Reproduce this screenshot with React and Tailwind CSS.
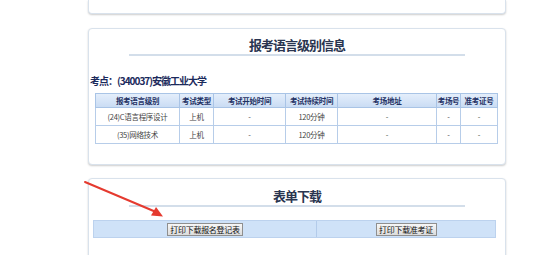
import React from 'react';

const cols = [84, 34, 72, 52, 99, 24, 37];
const heads = ['报考语言级别', '考试类型', '考试开始时间', '考试持续时间', '考场地址', '考场号', '准考证号'];
const rows = [
  ['(24)C语言程序设计', '上机', '-', '120分钟', '-', '-', '-'],
  ['(35)网络技术', '上机', '-', '120分钟', '-', '-', '-'],
];

const font = { fontFamily: '"Noto Sans CJK SC", "Liberation Sans", sans-serif' };

const Title = ({ children }) => (
  <div className="flex flex-col items-center">
    <h2 className="text-[13px] leading-[15px] font-bold tracking-[-1px] text-[#2a3550]">
      {children}
    </h2>
    <div className="mt-[2px] h-[2px] w-[336px] bg-[#d3deea]" />
  </div>
);

const App = () => {
  return (
    <div className="relative h-[255px] w-[553px] overflow-hidden bg-white" style={font}>
      <div className="ml-[88px] w-[418px]">
        {/* bottom of the previous panel */}
        <div className="h-[14px] rounded-b-[4px] border-x border-b border-[#d9e2ec] bg-white shadow-[0_1px_2px_rgba(0,0,0,0.2)]" />

        {/* 报考语言级别信息 */}
        <div className="mt-[14px] h-[137px] rounded-[4px] border border-[#d9e2ec] bg-white pt-[8px] shadow-[0_1px_2px_rgba(0,0,0,0.2)]">
          <Title>报考语言级别信息</Title>
          <p className="ml-[1px] mt-[19px] text-[10px] leading-[12px] font-bold tracking-[-1px] text-[#1b2a5c]">
            考点：(340037)安徽工业大学
          </p>
          <table className="ml-[6px] mt-[6px] w-[402px] table-fixed border-collapse text-[7.5px] tracking-[-0.3px]">
            <colgroup>
              {cols.map((w, i) => (
                <col key={i} style={{ width: w }} />
              ))}
            </colgroup>
            <thead>
              <tr className="h-[14px] bg-gradient-to-b from-[#e4eefb] to-[#c8dbf3]">
                {heads.map((h) => (
                  <th key={h} className="border border-[#a9c4e6] p-0 text-center font-bold text-[#1f3164]">
                    {h}
                  </th>
                ))}
              </tr>
            </thead>
            <tbody>
              {rows.map((r, ri) => (
                <tr key={ri} className="h-[18px] bg-white">
                  {r.map((c, ci) => (
                    <td key={ci} className="border border-[#b7cde9] p-0 text-center text-[#444]">
                      {c}
                    </td>
                  ))}
                </tr>
              ))}
            </tbody>
          </table>
        </div>

        {/* 表单下载 */}
        <div className="mt-[13px] h-[100px] rounded-[4px] border border-[#d9e2ec] bg-white pt-[9px] shadow-[0_1px_2px_rgba(0,0,0,0.2)]">
          <Title>表单下载</Title>
          <div className="ml-[4px] mt-[13px] flex h-[18px] w-[403px] border border-[#bcd2ee] bg-[#cfe2f8]">
            <div className="flex w-[223px] items-center justify-center border-r border-[#b3cbea]">
              <button className="h-[13px] w-[76px] border border-[#8f8f8f] bg-gradient-to-b from-[#f7f7f7] to-[#dcdcdc] text-[8px] leading-[11px] tracking-[-0.3px] text-[#111]">
                打印下载报名登记表
              </button>
            </div>
            <div className="flex flex-1 items-center justify-center">
              <button className="h-[13px] w-[61px] border border-[#8f8f8f] bg-gradient-to-b from-[#f7f7f7] to-[#dcdcdc] text-[8px] leading-[11px] tracking-[-0.3px] text-[#111]">
                打印下载准考证
              </button>
            </div>
          </div>
        </div>
      </div>

      {/* red annotation arrow */}
      <svg className="pointer-events-none absolute left-0 top-0" width="553" height="255">
        <line x1="85" y1="182" x2="156" y2="212" stroke="#e53a2f" strokeWidth="2" strokeLinecap="round" />
        <polygon points="163,216.5 151,215.5 156,207" fill="#e53a2f" />
      </svg>
    </div>
  );
};

export default App;
